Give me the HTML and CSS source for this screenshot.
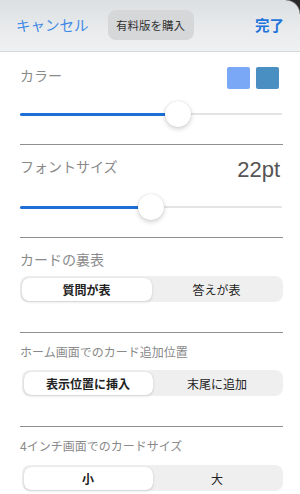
FILE: index.html
```html
<!DOCTYPE html>
<html lang="ja">
<head>
<meta charset="utf-8">
<link rel="stylesheet" href="styles.css">
</head>
<body>
<div class="screen">
  <header class="navbar">
    <span class="nav-cancel">キャンセル</span>
    <span class="nav-buy">有料版を購入</span>
    <span class="nav-done">完了</span>
    <span class="corner"></span>
  </header>
  <main class="content">
    <section class="sec sec-color">
      <div class="row">
        <span class="label">カラー</span>
        <div class="swatches">
          <span class="swatch swatch-a"></span>
          <span class="swatch swatch-b"></span>
        </div>
      </div>
      <div class="slider">
        <div class="track"></div>
        <div class="fill" style="width:60.3%"></div>
        <div class="thumb" style="left:60.3%"></div>
      </div>
    </section>
    <section class="sec sec-font">
      <div class="row">
        <span class="label">フォントサイズ</span>
        <span class="value">22pt</span>
      </div>
      <div class="slider">
        <div class="track"></div>
        <div class="fill" style="width:50%"></div>
        <div class="thumb" style="left:50%"></div>
      </div>
    </section>
    <section class="sec sec-seg sec-side">
      <div class="label">カードの裏表</div>
      <div class="seg">
        <span class="seg-item on">質問が表</span>
        <span class="seg-item">答えが表</span>
      </div>
    </section>
    <section class="sec sec-seg sec-small sec-pos">
      <div class="label">ホーム画面でのカード追加位置</div>
      <div class="seg">
        <span class="seg-item on">表示位置に挿入</span>
        <span class="seg-item">末尾に追加</span>
      </div>
    </section>
    <section class="sec sec-seg sec-small sec-last">
      <div class="label">4インチ画面でのカードサイズ</div>
      <div class="seg">
        <span class="seg-item on">小</span>
        <span class="seg-item">大</span>
      </div>
    </section>
  </main>
</div>
</body>
</html>
```

FILE: styles.css
```css
* { box-sizing: border-box; }
html, body {
  margin: 0;
  padding: 0;
  background: #ffffff;
}
body {
  font-family: "Noto Sans CJK JP", "Noto Sans", sans-serif;
  color: #222;
}
.screen {
  width: 300px;
  height: 494px;
  overflow: hidden;
  position: relative;
}
.navbar {
  position: relative;
  height: 52px;
  display: flex;
  align-items: center;
  padding: 0 16px 0 16px;
  background: linear-gradient(#dcdfe1, #e9ebed 60%, #eef0f1);
  border-bottom: 1px solid #d6d8da;
}
.nav-cancel {
  font-size: 14.5px;
  color: #3f8ae6;
  line-height: 20px;
  margin-top: -2px;
}
.nav-buy {
  margin-left: 19px;
  height: 30px;
  width: 86px;
  border-radius: 8px;
  background: #d5d7d9;
  font-size: 11.5px;
  color: #333;
  display: flex;
  align-items: center;
  justify-content: center;
  margin-top: -2px;
}
.nav-done {
  margin-left: auto;
  font-size: 14.5px;
  font-weight: 700;
  color: #1f74dc;
  line-height: 20px;
  margin-top: -2px;
}
.corner {
  position: absolute;
  top: 0;
  right: 0;
  width: 14px;
  height: 14px;
  background: radial-gradient(circle at 0 100%, transparent 13px, #2a2a2a 14.5px);
}
.content {
  padding: 0 17px 0 20px;
}
.sec {
  border-bottom: 1px solid #8f8f8f;
}
.row {
  display: flex;
  justify-content: space-between;
  align-items: flex-start;
}
.label {
  font-size: 14px;
  line-height: 18px;
  color: #8a8a8a;
}
.sec-color {
  padding-top: 15px;
  padding-bottom: 16px;
}
.sec-color .label {
  line-height: 16px;
}
.swatches {
  display: flex;
  gap: 6px;
  margin-right: 4px;
}
.swatch {
  width: 23px;
  height: 22px;
  border-radius: 2px;
}
.swatch-a { background: #7ba7f7; }
.swatch-b { background: #4a8fc2; }
.slider {
  position: relative;
  height: 28px;
  margin-top: 11px;
  margin-right: 1px;
}
.track {
  position: absolute;
  left: 0;
  right: 0;
  top: 13px;
  height: 2px;
  border-radius: 1px;
  background: #e4e4e4;
}
.fill {
  position: absolute;
  left: 0;
  top: 12.5px;
  height: 3px;
  border-radius: 2px;
  background: #1d6fd6;
}
.thumb {
  position: absolute;
  top: 1px;
  width: 26px;
  height: 26px;
  margin-left: -13px;
  border-radius: 50%;
  background: #fff;
  box-shadow: 0 2px 5px rgba(0,0,0,0.18), 0 0 1px rgba(0,0,0,0.2);
}
.sec-font {
  padding-top: 12px;
  padding-bottom: 16px;
}
.sec-font .slider {
  margin-top: 10px;
}
.value {
  font-family: "Liberation Sans", Arial, sans-serif;
  font-size: 22px;
  line-height: 26px;
  color: #555;
  margin-right: 3px;
}
.sec-side {
  padding-top: 12px;
  padding-bottom: 30px;
}
.seg {
  margin-top: 8px;
  height: 26px;
  display: grid;
  grid-template-columns: 1fr 1fr;
  padding: 1.5px;
  border-radius: 8px;
  background: #efeff0;
}
.seg-item {
  display: flex;
  align-items: center;
  justify-content: center;
  font-size: 12px;
  color: #222;
}
.seg-item.on {
  background: #fff;
  border-radius: 7px;
  font-weight: 700;
  box-shadow: 0 1px 3px rgba(0,0,0,0.14), 0 0 0.5px rgba(0,0,0,0.2);
}
.sec-small .label {
  font-size: 12px;
  line-height: 16px;
}
.sec-small .seg {
  margin-left: 2px;
}
.sec-pos {
  padding-top: 11px;
  padding-bottom: 30px;
}
.sec-pos .seg {
  margin-top: 10px;
}
.sec-last {
  padding-top: 11px;
  border-bottom: none;
}
.sec-last .seg {
  margin-top: 11px;
}
```
